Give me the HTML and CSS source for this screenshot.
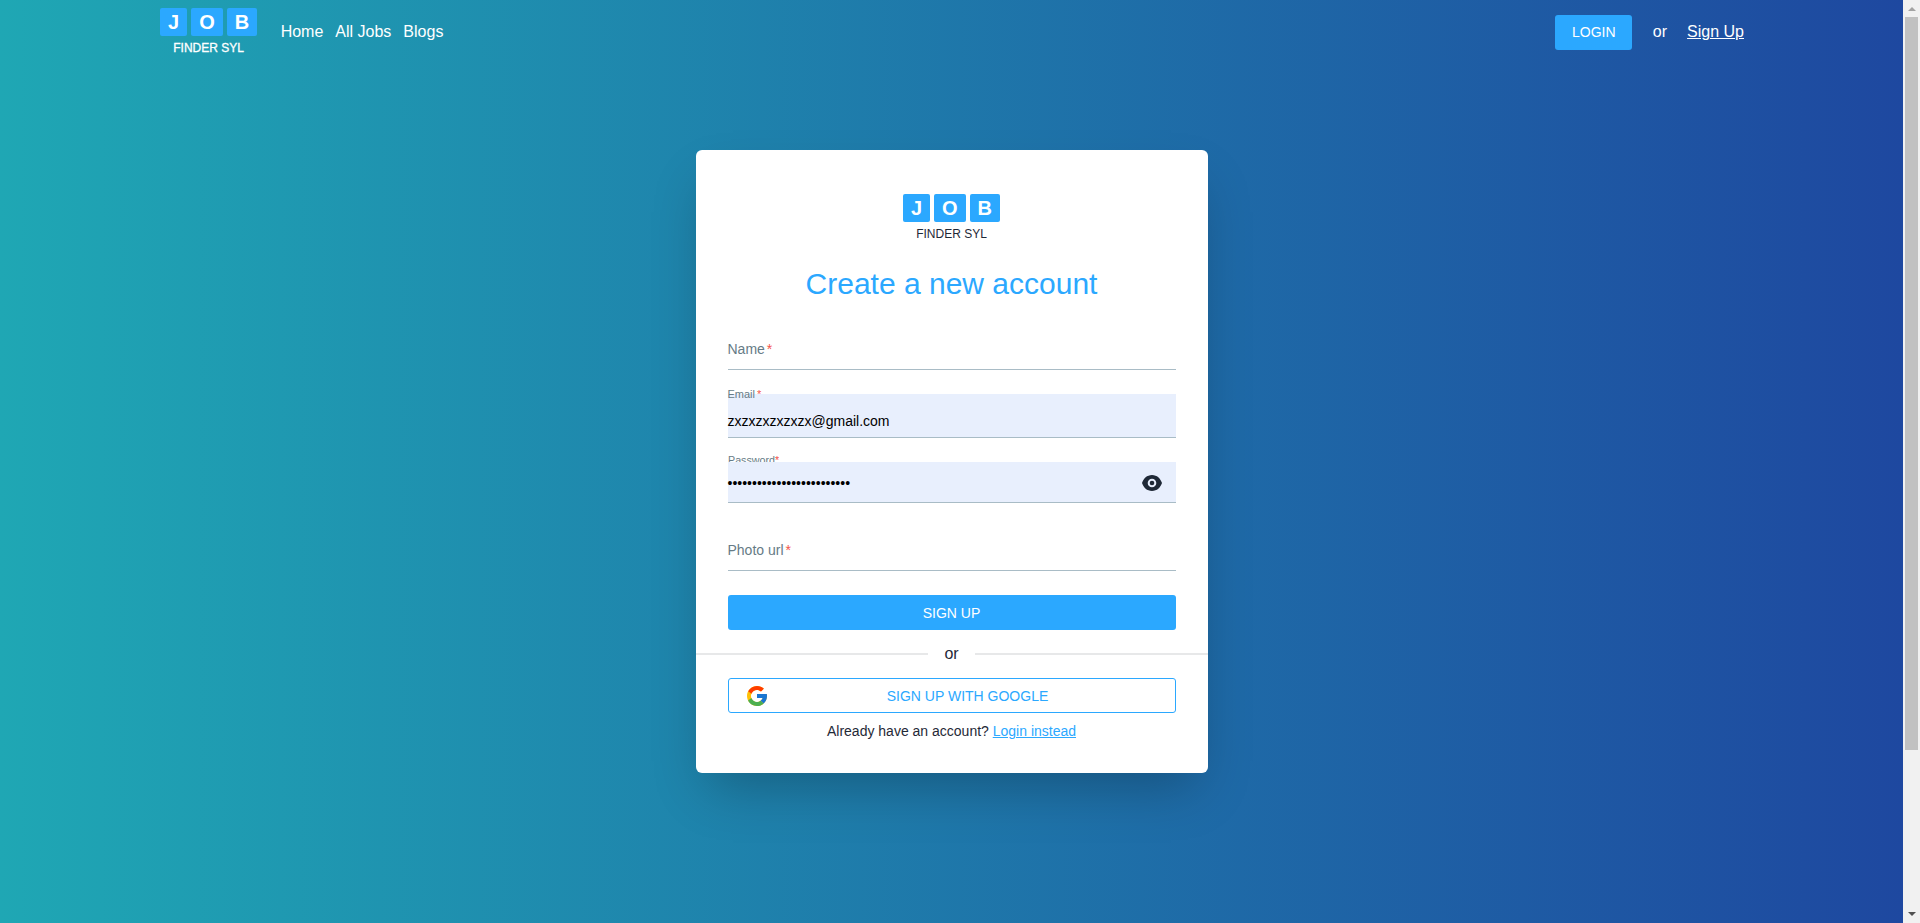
FILE: index.html
```html
<!DOCTYPE html>
<html lang="en">
<head>
<meta charset="utf-8">
<title>Job Finder Syl</title>
<link rel="stylesheet" href="styles.css">
</head>
<body>
<div class="page">
  <header class="navbar">
    <div class="nav-left">
      <div class="logo">
        <div class="tiles"><span>J</span><span>O</span><span>B</span></div>
        <div class="logo-name bold">FINDER SYL</div>
      </div>
      <nav class="links"><a>Home</a><a>All Jobs</a><a>Blogs</a></nav>
    </div>
    <div class="nav-right">
      <button class="btn login">LOGIN</button>
      <span>or</span>
      <a class="signup-link">Sign Up</a>
    </div>
  </header>
  <main class="card">
    <div class="logo card-logo">
      <div class="tiles"><span>J</span><span>O</span><span>B</span></div>
      <div class="logo-name">FINDER SYL</div>
    </div>
    <h1>Create a new account</h1>
    <form class="form">
      <div class="field name"><label>Name<i>*</i></label></div>
      <div class="field email filled"><label>Email<i>*</i></label><span class="value">zxzxzxzxzxzx@gmail.com</span></div>
      <div class="field password filled">
        <label>Password<i>*</i></label>
        <span class="value dots">•••••••••••••••••••••••••</span>
        <svg class="eye" viewBox="0 0 20 16"><path fill="#1f2937" fill-rule="evenodd" d="M10 0C5 0 1.400 3.600 0 8c1.400 4.400 5 8 10 8s8.600-3.600 10-8C18.600 3.600 15 0 10 0Zm0 3.700a4.300 4.300 0 1 1 0 8.600a4.300 4.300 0 0 1 0-8.600Z"/><circle cx="10" cy="8" r="2.300" fill="#1f2937"/></svg>
      </div>
      <div class="field photo"><label>Photo url<i>*</i></label></div>
      <button class="btn submit" type="button">SIGN UP</button>
    </form>
    <div class="divider"><span>or</span></div>
    <button class="btn google">
      <svg viewBox="4 4 40 40"><path fill="#FFC107" d="M43.611 20.083H42V20H24v8h11.303c-1.649 4.657-6.080 8-11.303 8-6.627 0-12-5.373-12-12s5.373-12 12-12c3.059 0 5.842 1.154 7.961 3.039l5.657-5.657C34.046 6.053 29.268 4 24 4 12.955 4 4 12.955 4 24s8.955 20 20 20 20-8.955 20-20c0-1.341-.138-2.650-.389-3.917z"/><path fill="#FF3D00" d="M6.306 14.691l6.571 4.819C14.655 15.108 18.961 12 24 12c3.059 0 5.842 1.154 7.961 3.039l5.657-5.657C34.046 6.053 29.268 4 24 4 16.318 4 9.656 8.337 6.306 14.691z"/><path fill="#4CAF50" d="M24 44c5.166 0 9.860-1.977 13.409-5.192l-6.190-5.238C29.211 35.091 26.715 36 24 36c-5.202 0-9.619-3.317-11.283-7.946l-6.522 5.025C9.505 39.556 16.227 44 24 44z"/><path fill="#1976D2" d="M43.611 20.083H42V20H24v8h11.303a12.040 12.040 0 0 1-4.087 5.571l6.193 5.238C36.971 39.205 44 34 44 24c0-1.341-.138-2.650-.389-3.917z"/></svg>
      <span>SIGN UP WITH GOOGLE</span>
    </button>
    <p class="already">Already have an account? <a>Login instead</a></p>
  </main>
</div>
<aside class="scrollbar"><div class="up"></div><div class="thumb"></div><div class="down"></div></aside>
</body>
</html>
```
FILE: styles.css
```css
* { box-sizing: border-box; }
body {
  margin: 0;
  display: flex;
  height: 923px;
  overflow: hidden;
  font: 16px/24px "Liberation Sans", Arial, sans-serif;
  color: #1f2937;
}
.page {
  flex: 1;
  height: 923px;
  background: linear-gradient(90deg, #1fa7b4 0%, #1e48a0 100%);
}
.navbar {
  height: 64px;
  padding: 0 159px 0 160px;
  display: flex;
  justify-content: space-between;
  align-items: center;
  color: #fff;
}
.nav-left { display: flex; gap: 23.500px; }
.logo { display: flex; flex-direction: column; align-items: center; }
.tiles { display: flex; gap: 4px; }
.tiles span {
  height: 28px;
  padding: 0 8px;
  border-radius: 2px;
  background: #2ba8ff;
  color: #fff;
  font: bold 20px/28px "Liberation Sans", Arial, sans-serif;
}
.logo-name { font-size: 12px; line-height: 16px; margin-top: 4px; }
.bold { -webkit-text-stroke: 0.3px #fff; }
.links { display: flex; gap: 12px; align-items: center; }
.nav-right { display: flex; align-items: center; gap: 20px; }
.signup-link { text-decoration: underline; }
.btn {
  display: flex;
  align-items: center;
  justify-content: center;
  height: 35px;
  border: 0;
  border-radius: 3px;
  background: #2ba8ff;
  color: #fff;
  font: 14px/20px "Liberation Sans", Arial, sans-serif;
}
.login { width: 77px; padding: 0; margin-right: 0.500px; }
.card {
  width: 512px;
  height: 623px;
  margin: 86px auto 0;
  padding-top: 44px;
  border-radius: 6px;
  background: #fff;
  box-shadow: 0 25px 50px -12px rgba(0, 0, 0, 0.25);
}
h1 {
  margin: 24px 0 0;
  text-align: center;
  font-size: 30px;
  line-height: 36px;
  font-weight: 400;
  color: #2ba8ff;
}
.form { padding: 0 32px; }
.field {
  position: relative;
  height: 44px;
  border-bottom: 1px solid #a9bcc6;
}
.field label {
  position: absolute;
  left: 0;
  top: 13px;
  font-size: 14px;
  line-height: 20px;
  color: #667b86;
}
.field i { font-style: normal; color: #f4544c; margin-left: 2px; }
.name { margin-top: 24px; }
.filled { background: #e8effd; }
.filled label { font-size: 11px; line-height: 14px; top: -7px; }
.email { margin-top: 24px; }
.value { position: absolute; left: 0; top: 17px; font-size: 14px; line-height: 20px; color: #000; }
.password { margin-top: 24px; height: 41px; }
.password label { left: 0.500px; height: 7px; overflow: hidden; font-size: 10.700px; top: -7px; line-height: 10px; }
.password i { margin-left: 0; }
.dots { top: 10.500px; }
.eye { position: absolute; right: 14px; top: 13px; width: 20px; height: 16px; }
.photo { margin-top: 24px; }
.submit { width: 448px; margin-top: 24px; }
.divider { display: flex; align-items: center; gap: 16px; height: 24px; margin-top: 12px; }
.divider::before, .divider::after { content: ""; flex: 1; height: 2px; background: #e7e8e9; }
.google {
  width: 448px;
  margin: 12px auto 0;
  padding: 0 6px 0 18px;
  border: 1px solid #2ba8ff;
  background: #fff;
  color: #2ba8ff;
}
.google svg { width: 20px; height: 20px; }
.google span { flex: 1; text-align: center; }
.already { margin: 8px 0 0; text-align: center; font-size: 14px; line-height: 20px; }
.already a { color: #2ba8ff; text-decoration: underline; }
.scrollbar {
  width: 17px;
  height: 923px;
  background: #f1f1f1;
  display: flex;
  flex-direction: column;
  align-items: center;
}
.up { margin-top: 7px; border: 4px solid transparent; border-top: 0; border-bottom: 4px solid #a3a3a3; }
.thumb { width: 13px; height: 733px; margin-top: 6px; background: #c1c1c1; }
.down { margin: auto 0 7px; border: 4px solid transparent; border-bottom: 0; border-top: 4px solid #505050; }
```
